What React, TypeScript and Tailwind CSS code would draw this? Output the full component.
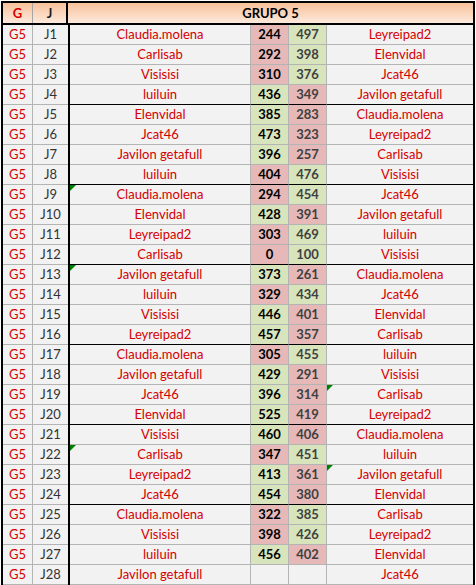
import React from 'react'

type Match = {
  j: string
  a: string
  sa: number | null
  sb: number | null
  b: string
  flagA?: boolean
  flagB?: boolean
}

const matches: Match[] = [
  { j: 'J1', a: 'Claudia.molena', sa: 244, sb: 497, b: 'Leyreipad2' },
  { j: 'J2', a: 'Carlisab', sa: 292, sb: 398, b: 'Elenvidal' },
  { j: 'J3', a: 'Visisisi', sa: 310, sb: 376, b: 'Jcat46' },
  { j: 'J4', a: 'luiluin', sa: 436, sb: 349, b: 'Javilon getafull' },
  { j: 'J5', a: 'Elenvidal', sa: 385, sb: 283, b: 'Claudia.molena' },
  { j: 'J6', a: 'Jcat46', sa: 473, sb: 323, b: 'Leyreipad2' },
  { j: 'J7', a: 'Javilon getafull', sa: 396, sb: 257, b: 'Carlisab' },
  { j: 'J8', a: 'luiluin', sa: 404, sb: 476, b: 'Visisisi' },
  { j: 'J9', a: 'Claudia.molena', sa: 294, sb: 454, b: 'Jcat46', flagA: true },
  { j: 'J10', a: 'Elenvidal', sa: 428, sb: 391, b: 'Javilon getafull' },
  { j: 'J11', a: 'Leyreipad2', sa: 303, sb: 469, b: 'luiluin' },
  { j: 'J12', a: 'Carlisab', sa: 0, sb: 100, b: 'Visisisi' },
  { j: 'J13', a: 'Javilon getafull', sa: 373, sb: 261, b: 'Claudia.molena', flagA: true },
  { j: 'J14', a: 'luiluin', sa: 329, sb: 434, b: 'Jcat46' },
  { j: 'J15', a: 'Visisisi', sa: 446, sb: 401, b: 'Elenvidal' },
  { j: 'J16', a: 'Leyreipad2', sa: 457, sb: 357, b: 'Carlisab' },
  { j: 'J17', a: 'Claudia.molena', sa: 305, sb: 455, b: 'luiluin' },
  { j: 'J18', a: 'Javilon getafull', sa: 429, sb: 291, b: 'Visisisi' },
  { j: 'J19', a: 'Jcat46', sa: 396, sb: 314, b: 'Carlisab', flagB: true },
  { j: 'J20', a: 'Elenvidal', sa: 525, sb: 419, b: 'Leyreipad2' },
  { j: 'J21', a: 'Visisisi', sa: 460, sb: 406, b: 'Claudia.molena' },
  { j: 'J22', a: 'Carlisab', sa: 347, sb: 451, b: 'luiluin', flagA: true },
  { j: 'J23', a: 'Leyreipad2', sa: 413, sb: 361, b: 'Javilon getafull', flagB: true },
  { j: 'J24', a: 'Jcat46', sa: 454, sb: 380, b: 'Elenvidal' },
  { j: 'J25', a: 'Claudia.molena', sa: 322, sb: 385, b: 'Carlisab' },
  { j: 'J26', a: 'Visisisi', sa: 398, sb: 426, b: 'Leyreipad2' },
  { j: 'J27', a: 'luiluin', sa: 456, sb: 402, b: 'Elenvidal' },
  { j: 'J28', a: 'Javilon getafull', sa: null, sb: null, b: 'Jcat46' },
]

// excel's little green "error" triangle in the cell corner
const Flag = () => (
  <svg className="absolute left-0 top-0" width="6" height="6" viewBox="0 0 6 6">
    <polygon points="0,0 6,0 0,6" fill="#008000" />
  </svg>
)

const scoreBg = (mine: number | null, other: number | null) => {
  if (mine === null || other === null) return 'bg-[#f2f2f2]'
  return mine > other ? 'bg-[#d8e4bc]' : 'bg-[#e6b8b7]'
}

export default function App() {
  return (
    <div className="min-h-screen bg-white pt-px pl-px" style={{ fontFamily: 'Lato, "Liberation Sans", sans-serif' }}>
      <div className="w-[474px] border-2 border-black text-[13px] leading-none">
        {/* header */}
        <div className="flex h-[22px] border-b-2 border-black bg-linear-to-b from-[#f7c29b] to-[#fce9dc]">
          <div className="flex w-[30px] items-center justify-center border-r border-[#a6a6a6] font-bold text-[#d40000]">G</div>
          <div className="flex w-[35px] items-center justify-center border-r-2 border-black font-bold text-[#1a1a1a]">J</div>
          <div className="flex flex-1 items-center justify-center font-bold text-black">GRUPO 5</div>
        </div>

        {matches.map((m, i) => {
          const last = i % 4 === 3 && i !== matches.length - 1
          const line = last ? 'border-black' : 'border-[#b4b4b4]'
          return (
            <div key={m.j} className="flex h-5 bg-[#f2f2f2]">
              <div className="flex w-[30px] items-center justify-center border-r border-b border-[#b4b4b4] text-[#d40000]">G5</div>
              <div className="flex w-[35px] items-center justify-center border-b border-[#b4b4b4] text-[#333333]">{m.j}</div>
              <div className="w-[2px] bg-black" />
              <div className={`relative flex w-[181px] items-center justify-center border-r border-r-[#b4b4b4] border-b ${line} text-[#d40000]`}>
                {m.flagA && <Flag />}
                {m.a}
              </div>
              <div className={`flex w-[38px] items-center justify-center border-r border-r-[#b4b4b4] border-b ${line} font-bold text-black ${scoreBg(m.sa, m.sb)}`}>
                {m.sa ?? ''}
              </div>
              <div className={`flex w-[38px] items-center justify-center border-r border-r-[#b4b4b4] border-b ${line} font-bold text-[#404040] ${scoreBg(m.sb, m.sa)}`}>
                {m.sb ?? ''}
              </div>
              <div className={`relative flex flex-1 items-center justify-center border-b ${line} text-[#d40000]`}>
                {m.flagB && <Flag />}
                {m.b}
              </div>
            </div>
          )
        })}
      </div>
    </div>
  )
}
